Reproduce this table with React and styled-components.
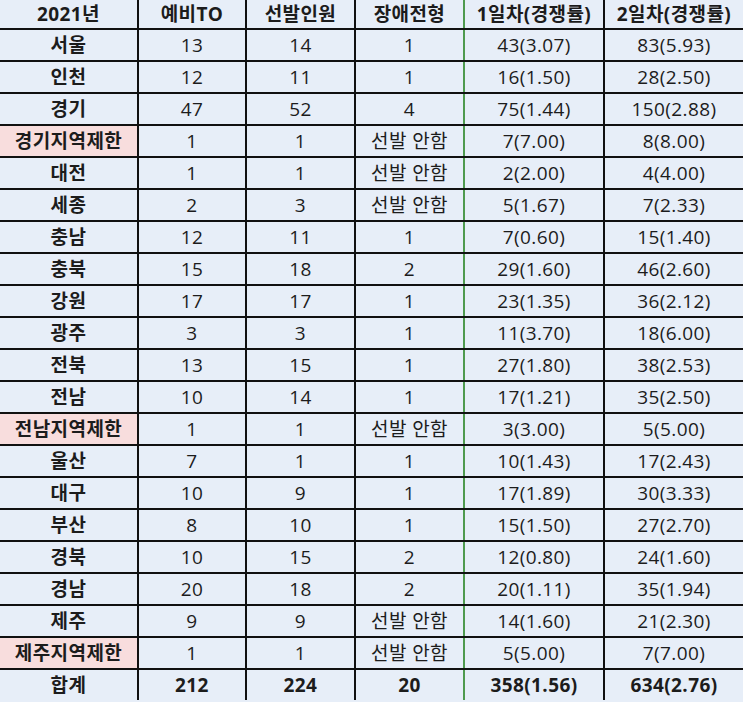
import React from "react";
import styled, { createGlobalStyle } from "styled-components";

const Global = createGlobalStyle`
  html, body {
    margin: 0;
    padding: 0;
    background: #e7eef8;
  }
  body {
    font-family: "Open Sans", "Noto Sans CJK KR", sans-serif;
    color: #1c1c1c;
  }
`;

const COLS = [138, 108, 109, 109, 140, 139];

const rows = [
  ["서울", "13", "14", "1", "43(3.07)", "83(5.93)"],
  ["인천", "12", "11", "1", "16(1.50)", "28(2.50)"],
  ["경기", "47", "52", "4", "75(1.44)", "150(2.88)"],
  ["경기지역제한", "1", "1", "선발 안함", "7(7.00)", "8(8.00)", true],
  ["대전", "1", "1", "선발 안함", "2(2.00)", "4(4.00)"],
  ["세종", "2", "3", "선발 안함", "5(1.67)", "7(2.33)"],
  ["충남", "12", "11", "1", "7(0.60)", "15(1.40)"],
  ["충북", "15", "18", "2", "29(1.60)", "46(2.60)"],
  ["강원", "17", "17", "1", "23(1.35)", "36(2.12)"],
  ["광주", "3", "3", "1", "11(3.70)", "18(6.00)"],
  ["전북", "13", "15", "1", "27(1.80)", "38(2.53)"],
  ["전남", "10", "14", "1", "17(1.21)", "35(2.50)"],
  ["전남지역제한", "1", "1", "선발 안함", "3(3.00)", "5(5.00)", true],
  ["울산", "7", "1", "1", "10(1.43)", "17(2.43)"],
  ["대구", "10", "9", "1", "17(1.89)", "30(3.33)"],
  ["부산", "8", "10", "1", "15(1.50)", "27(2.70)"],
  ["경북", "10", "15", "2", "12(0.80)", "24(1.60)"],
  ["경남", "20", "18", "2", "20(1.11)", "35(1.94)"],
  ["제주", "9", "9", "선발 안함", "14(1.60)", "21(2.30)"],
  ["제주지역제한", "1", "1", "선발 안함", "5(5.00)", "7(7.00)", true],
];

const Table = styled.table`
  border-collapse: collapse;
  table-layout: fixed;
  width: 743px;
  font-size: 19px;
  letter-spacing: 0.4px;
`;

const Cell = styled.td`
  height: 30px;
  padding: 0;
  text-align: center;
  vertical-align: middle;
  white-space: nowrap;
  line-height: 1;
  border: 2px solid #111;
  font-weight: ${(p) => (p.$bold ? 700 : 400)};
  background: ${(p) => (p.$pink ? "#f8dddd" : "#e7eef8")};
  border-right-color: ${(p) => (p.$green ? "#4f9a4f" : "#111")};

  &:first-child {
    border-left: none;
  }
  &:last-child {
    border-right: none;
  }
`;

const HeadRow = styled.tr`
  td {
    border-top: none;
    height: 28px;
    font-weight: 700;
  }
`;

const LastRow = styled.tr`
  td {
    border-bottom: none;
    font-weight: 700;
  }
`;

export default function App() {
  return (
    <>
      <Global />
      <Table>
        <colgroup>
          {COLS.map((w, i) => (
            <col key={i} style={{ width: w }} />
          ))}
        </colgroup>
        <tbody>
          <HeadRow>
            {["2021년", "예비TO", "선발인원", "장애전형", "1일차(경쟁률)", "2일차(경쟁률)"].map((h, i) => (
              <Cell key={h} $green={i === 3}>
                {h}
              </Cell>
            ))}
          </HeadRow>
          {rows.map((r) => (
            <tr key={r[0]}>
              {r.slice(0, 6).map((v, i) => (
                <Cell key={i} $bold={i === 0} $pink={i === 0 && r[6]} $green={i === 3}>
                  {v}
                </Cell>
              ))}
            </tr>
          ))}
          <LastRow>
            {["합계", "212", "224", "20", "358(1.56)", "634(2.76)"].map((v, i) => (
              <Cell key={i} $green={i === 3}>
                {v}
              </Cell>
            ))}
          </LastRow>
        </tbody>
      </Table>
    </>
  );
}
